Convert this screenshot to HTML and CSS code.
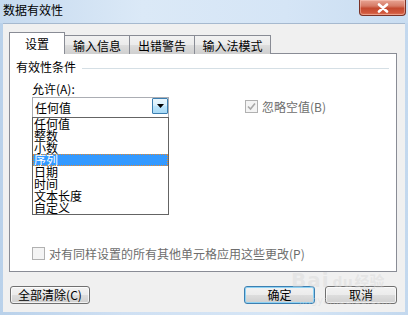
FILE: index.html
```html
<!DOCTYPE html>
<html lang="zh-CN">
<head>
<meta charset="utf-8">
<title>数据有效性</title>
<link rel="stylesheet" href="styles.css">
</head>
<body>
<div class="window">
  <div class="titlebar">
    <span class="title">数据有效性</span>
    <span class="close"><svg width="14" height="10" viewBox="0 0 14 10"><path d="M3 1.5 L11 8.5 M11 1.5 L3 8.5" stroke="#fff" stroke-width="2.6" stroke-linecap="round"/><path d="M3 1.5 L11 8.5 M11 1.5 L3 8.5" stroke="#fff" stroke-width="1.6" stroke-linecap="round"/></svg></span>
  </div>
  <div class="client">
    <div class="tabs">
      <div class="tab active">设置</div>
      <div class="tab t2">输入信息</div>
      <div class="tab t3">出错警告</div>
      <div class="tab t4">输入法模式</div>
    </div>
    <div class="panel">
      <div class="group-title"><span>有效性条件</span><span class="rule"></span></div>
      <div class="cond">
        <div class="left-col">
          <div class="label">允许(A):</div>
          <div class="combo">
            <span class="combo-text">任何值</span>
            <span class="drop"><svg width="7" height="4" viewBox="0 0 7 4"><path d="M0 0H7L3.5 4Z" fill="#000"/></svg></span>
          </div>
          <ul class="list">
            <li>任何值</li>
            <li>整数</li>
            <li>小数</li>
            <li class="sel">序列</li>
            <li>日期</li>
            <li>时间</li>
            <li>文本长度</li>
            <li>自定义</li>
          </ul>
        </div>
        <div class="right-col">
          <label class="check disabled"><span class="box"><svg width="11" height="11" viewBox="0 0 11 11"><path d="M2 5.5 L4.5 8 L9 2.5" stroke="#a8a8a8" stroke-width="1.6" fill="none"/></svg></span>忽略空值(B)</label>
        </div>
      </div>
      <label class="check disabled bottom-check"><span class="box"></span>对有同样设置的所有其他单元格应用这些更改(P)</label>
    </div>
    <div class="buttons">
      <button class="btn clear">全部清除(C)</button>
      <span class="spacer"></span>
      <button class="btn ok">确定</button>
      <button class="btn cancel">取消</button>
    </div>
    <div class="watermark"><span class="wm-big">Bai</span><span class="wm-paw">du</span><span class="wm-cn">经验</span><div class="wm-url">jingyan.baidu.com</div></div>
  </div>
</div>
</body>
</html>
```

FILE: styles.css
```css
* { box-sizing: border-box; }
html, body { margin: 0; padding: 0; }
body {
  width: 408px;
  height: 315px;
  overflow: hidden;
  font-family: "Noto Sans CJK SC", "DejaVu Sans", sans-serif;
  font-size: 12px;
  color: #000;
}
.window {
  width: 408px;
  height: 315px;
  background: linear-gradient(90deg, #b9d1ea 0%, #cfe0f3 30%, #d6e6f6 70%, #c3d8ee 100%);
  display: flex;
  flex-direction: column;
}
.titlebar {
  height: 23px;
  display: flex;
  align-items: flex-start;
  padding-left: 3px;
  background: linear-gradient(90deg, #c6daef 0%, #dbe9f7 35%, #d5e5f6 70%, #c9ddf1 100%);
}
.title {
  margin-top: 3px;
  line-height: 13px;
  font-size: 12px;
  color: #000;
}
.close {
  margin-left: auto;
  margin-right: 2px;
  width: 47px;
  height: 16px;
  border: 1px solid #7a3226;
  border-top: none;
  border-radius: 0 0 4px 4px;
  background: linear-gradient(#e8a493 0%, #d67b66 40%, #c44a30 55%, #d1583d 85%, #e07d5f 100%);
  display: flex;
  align-items: center;
  justify-content: center;
  box-shadow: inset 0 0 0 1px rgba(255,210,200,0.45);
}
.client {
  margin: 0 3px;
  height: 289px;
  background: #f0f0f0;
  border-top: 1px solid #a6b9cf;
  position: relative;
  display: flex;
  flex-direction: column;
}
.tabs {
  display: flex;
  align-items: flex-end;
  margin-top: 8px;
  padding-left: 6px;
  position: relative;
  z-index: 1;
  margin-bottom: -1px;
}
.tab {
  height: 19px;
  border: 1px solid #898c95;
  border-bottom: none;
  background: linear-gradient(#f2f2f2 0%, #ebebeb 50%, #dddddd 51%, #cfcfcf 100%);
  text-align: center;
  line-height: 17px;
  padding-top: 1px;
  margin-left: -1px;
}
.tab.active {
  height: 22px;
  width: 56px;
  margin-left: 0;
  background: #fff;
  line-height: 18px;
  padding-top: 2px;
  position: relative;
  z-index: 2;
}
.t2 { width: 66px; }
.t3 { width: 66px; }
.t4 { width: 77px; }
.panel {
  margin-left: 6px;
  width: 388px;
  height: 219px;
  border: 1px solid #898c95;
  background: #fff;
  padding: 0 7px 11px 6px;
  display: flex;
  flex-direction: column;
}
.group-title {
  margin-top: 7px;
  display: flex;
  align-items: center;
  line-height: 12px;
  height: 12px;
}
.rule {
  flex: 1;
  height: 1px;
  background: #d5dfe5;
  margin-left: 6px;
  margin-top: 3px;
}
.cond {
  display: flex;
  padding-left: 16px;
}
.left-col {
  width: 137px;
  display: flex;
  flex-direction: column;
}
.label {
  margin-top: 10px;
  line-height: 12px;
  height: 12px;
}
.combo {
  margin-top: 2px;
  height: 20px;
  border: 1px solid #abadb3;
  border-bottom: none;
  display: flex;
  align-items: flex-start;
}
.combo-text {
  padding-left: 2px;
  line-height: 16px;
  margin-top: 2px;
}
.drop {
  margin-left: auto;
  margin-top: 0;
  width: 16px;
  height: 16px;
  border: 1px solid #3c7fb1;
  border-radius: 1px;
  background: linear-gradient(#eaf6fd 0%, #d9f0fc 45%, #bee6fd 50%, #a7d9f5 100%);
  display: flex;
  align-items: center;
  justify-content: center;
}
.list {
  list-style: none;
  margin: 0;
  padding: 0;
  border: 1px solid #646464;
  height: 98px;
}
.list li {
  height: 12px;
  line-height: 12px;
  font-size: 12px;
  padding-left: 1px;
  white-space: nowrap;
}
.list li.sel {
  background: #3399ff;
  color: #fff;
  outline: 1px dotted #e8892c;
  outline-offset: -1px;
}
.right-col {
  margin-left: 76px;
  padding-top: 27px;
}
.check {
  display: flex;
  align-items: center;
  line-height: 13px;
}
.check.disabled { color: #6d6d6d; }
.box {
  width: 13px;
  height: 13px;
  border: 1px solid #b1b1b1;
  background: #f4f4f4;
  margin-right: 4px;
  display: flex;
  align-items: center;
  justify-content: center;
}
.bottom-check {
  margin-top: auto;
  margin-left: 16px;
}
.buttons {
  display: flex;
  margin-top: 14px;
  padding: 0 8px 0 7px;
  gap: 10px;
}
.spacer { flex: 1; }
.btn {
  font-family: "Noto Sans CJK SC", "DejaVu Sans", sans-serif;
  font-size: 12px;
  height: 18px;
  line-height: 14px;
  padding: 0;
  border: 1px solid #707070;
  border-radius: 3px;
  background: linear-gradient(#f2f2f2 0%, #ebebeb 50%, #dddddd 51%, #cfcfcf 100%);
  color: #000;
  box-shadow: inset 0 0 0 1px rgba(255,255,255,0.7);
}
.clear { width: 80px; }
.ok {
  width: 71px;
  border-color: #3c7fb1;
  box-shadow: inset 0 0 0 1px #8ed2f4;
}
.cancel { width: 72px; }
.watermark {
  position: absolute;
  left: 288px;
  top: 246px;
  color: rgba(215, 215, 215, 0.45);
  font-family: "DejaVu Sans", sans-serif;
  font-weight: bold;
  pointer-events: none;
  white-space: nowrap;
  line-height: 1;
}
.wm-big { font-size: 20px; letter-spacing: 1px; }
.wm-paw { font-size: 14px; margin-left: 3px; }
.wm-cn { font-family: "Noto Sans CJK SC", sans-serif; font-size: 15px; margin-left: 2px; }
.wm-url { font-size: 10px; font-weight: normal; margin-left: 8px; margin-top: 6px; }
```
